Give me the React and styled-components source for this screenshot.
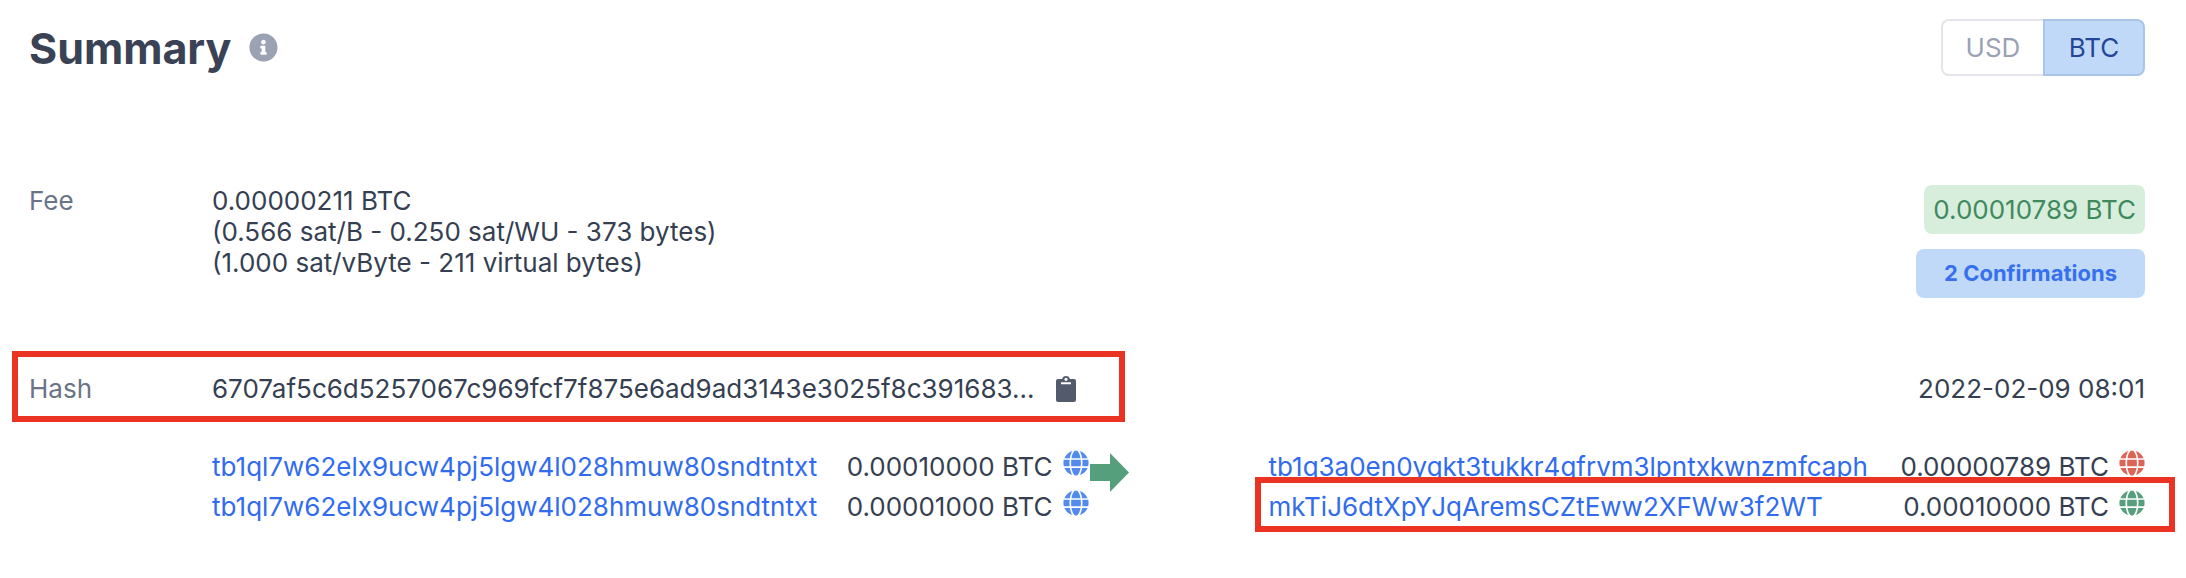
import React from "react";
import styled, { createGlobalStyle } from "styled-components";
import { FaGlobe, FaInfoCircle } from "react-icons/fa";

const GlobalStyle = createGlobalStyle`
  *, *::before, *::after { box-sizing: border-box; }
  body {
    margin: 0;
    background: #fff;
    color: #363f52;
    font-family: Inter, "Liberation Sans", sans-serif;
    font-size: 26px;
    font-weight: 400;
    line-height: 31px;
  }
`;

const Page = styled.main`
  padding: 19px 41px 50px 29px;
`;

const Header = styled.header`
  display: flex;
  align-items: center;
  justify-content: space-between;
  margin-bottom: 109px;
`;

const TitleGroup = styled.div`
  display: flex;
  align-items: center;
  gap: 18px;
  color: #9aa2b4;
`;

const Title = styled.h1`
  margin: 0;
  color: #3a4255;
  font-size: 43px;
  font-weight: 700;
  line-height: 56px;
`;

const UnitSwitch = styled.div`
  display: flex;
`;

const UnitButton = styled.button`
  width: 102px;
  height: 57px;
  padding: 0;
  border: 2px solid ${(p) => (p.$active ? "#a9c5ea" : "#e3e5ea")};
  border-radius: ${(p) => (p.$active ? "0 8px 8px 0" : "8px 0 0 8px")};
  ${(p) => !p.$active && "border-right: 0;"}
  background: ${(p) => (p.$active ? "#c0d9f8" : "#fff")};
  color: ${(p) => (p.$active ? "#244699" : "#9aa2b4")};
  font: inherit;
  cursor: pointer;
`;

const Row = styled.section`
  display: grid;
  grid-template-columns: 183px minmax(0, 1fr) 180px minmax(0, 1fr);
  margin-bottom: ${(p) => p.$gap || 0}px;
`;

const Label = styled.span`
  color: #6b7487;
`;

const FeeLines = styled.div`
  display: flex;
  flex-direction: column;
`;

const Aside = styled.div`
  grid-column: 4;
  display: flex;
  flex-direction: column;
  align-items: flex-end;
  gap: 15px;
`;

const Amount = styled.span`
  padding: 9px;
  border-radius: 8px;
  background: #d8eedc;
  color: #40895f;
`;

const Confirmations = styled.button`
  height: 49px;
  padding: 0 28px;
  border: 0;
  border-radius: 8px;
  background: #c0d9f8;
  color: #3670ee;
  font: inherit;
  font-size: 22px;
  font-weight: 700;
`;

const Outlined = styled.div`
  position: relative;

  &::after {
    content: "";
    position: absolute;
    inset: ${(p) => p.$inset};
    border: 6px solid #eb3323;
    pointer-events: none;
  }
`;

const HashLine = styled(Outlined)`
  grid-column: 1 / 3;
  display: grid;
  grid-template-columns: 183px minmax(0, 1fr);
`;

const HashValue = styled.div`
  display: flex;
  align-items: center;
  gap: 22px;
`;

const CopyButton = styled.button`
  display: flex;
  padding: 0;
  border: 0;
  background: none;
  color: #525a6b;
  cursor: pointer;
`;

const TransferList = styled.div`
  grid-column: ${(p) => p.$column};
`;

const Transfer = styled.div`
  display: flex;
  align-items: center;
  height: 40px;
  padding-bottom: 2px;
`;

const Address = styled.a`
  flex: 1;
  color: #316cee;
  text-decoration: none;
`;

const GlobeIcon = styled(FaGlobe)`
  width: 26px;
  height: 26px;
  margin: 0 0 6px 10px;
  color: ${(p) => p.color};
`;

const ArrowCell = styled.div`
  padding: 6px 1px;
`;

function ClipboardIcon() {
  return (
    <svg width="20" height="26" viewBox="0 0 20 26" aria-hidden="true">
      <path
        fill="currentColor"
        fillRule="evenodd"
        d="M2 3H6.200C6.500 1.200 8 0 10 0S13.500 1.200 13.800 3H18Q20 3 20 5V24Q20 26 18 26H2Q0 26 0 24V5Q0 3 2 3ZM10 1.700A1.600 1.600 0 0 0 10 4.900A1.600 1.600 0 0 0 10 1.700ZM5 6.300V8.300H15V6.300Z"
      />
    </svg>
  );
}

function ArrowIcon() {
  return (
    <svg width="39" height="39" viewBox="0 0 39 39" aria-hidden="true">
      <path fill="#569f7d" d="M0 11H20V0L39 19.500L20 39V28H0Z" />
    </svg>
  );
}

const inputAddress = "tb1ql7w62elx9ucw4pj5lgw4l028hmuw80sndtntxt";

function TransferRow({ address, amount, color }) {
  return (
    <Transfer>
      <Address href={`#${address}`}>{address}</Address>
      <span>{amount} BTC</span>
      <GlobeIcon color={color} />
    </Transfer>
  );
}

export default function App() {
  return (
    <>
      <GlobalStyle />
      <Page>
        <Header>
          <TitleGroup>
            <Title>Summary</Title>
            <FaInfoCircle size={29} />
          </TitleGroup>
          <UnitSwitch>
            <UnitButton type="button">USD</UnitButton>
            <UnitButton type="button" $active>BTC</UnitButton>
          </UnitSwitch>
        </Header>

        <Row $gap={75}>
          <Label>Fee</Label>
          <FeeLines>
            <span>0.00000211 BTC</span>
            <span>(0.566 sat/B - 0.250 sat/WU - 373 bytes)</span>
            <span>(1.000 sat/vByte - 211 virtual bytes)</span>
          </FeeLines>
          <Aside>
            <Amount>0.00010789 BTC</Amount>
            <Confirmations type="button">2 Confirmations</Confirmations>
          </Aside>
        </Row>

        <Row $gap={43}>
          <HashLine $inset="-22px -36px -18px -17px">
            <Label>Hash</Label>
            <HashValue>
              <span>6707af5c6d5257067c969fcf7f875e6ad9ad3143e3025f8c391683...</span>
              <CopyButton type="button" aria-label="Copy hash">
                <ClipboardIcon />
              </CopyButton>
            </HashValue>
          </HashLine>
          <Aside>
            <time dateTime="2022-02-09T08:01">2022-02-09 08:01</time>
          </Aside>
        </Row>

        <Row>
          <TransferList $column={2}>
            <TransferRow address={inputAddress} amount="0.00010000" color="#528aee" />
            <TransferRow address={inputAddress} amount="0.00001000" color="#528aee" />
          </TransferList>
          <ArrowCell>
            <ArrowIcon />
          </ArrowCell>
          <TransferList $column={4}>
            <TransferRow
              address="tb1q3a0en0yqkt3tukkr4qfrvm3lpntxkwnzmfcaph"
              amount="0.00000789"
              color="#dd6557"
            />
            <Outlined $inset="-10px -30px -5px -14px">
              <TransferRow
                address="mkTiJ6dtXpYJqAremsCZtEww2XFWw3f2WT"
                amount="0.00010000"
                color="#569f7d"
              />
            </Outlined>
          </TransferList>
        </Row>
      </Page>
    </>
  );
}
